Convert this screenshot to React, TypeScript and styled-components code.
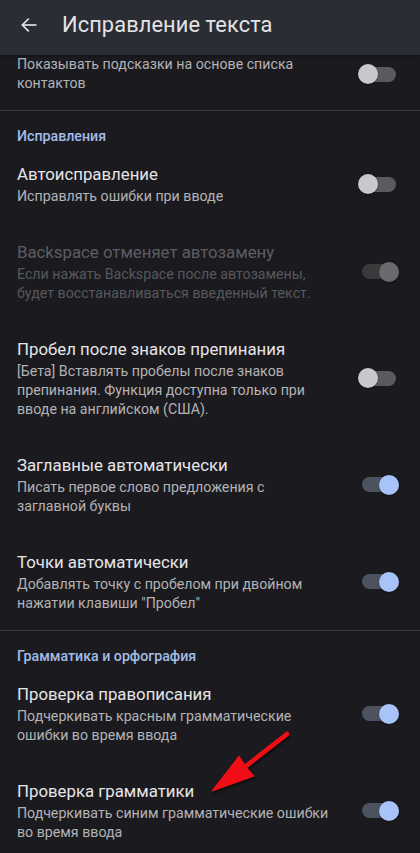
import React from "react";
import styled, { createGlobalStyle } from "styled-components";

const GlobalStyle = createGlobalStyle`
  html, body {
    margin: 0;
    padding: 0;
    background: #1b1b1f;
  }
  body {
    font-family: Roboto, "Noto Sans", "Liberation Sans", sans-serif;
  }
`;

const Screen = styled.div`
  position: relative;
  width: 420px;
  height: 853px;
  overflow: hidden;
  background: #1b1b1f;
  color: #e4e3e6;
`;

const TopBar = styled.header`
  display: flex;
  align-items: center;
  height: 55px;
  background: #2a2d33;
  box-shadow: 0 1px 2px rgba(0, 0, 0, 0.4);
  position: relative;
  z-index: 1;
`;

const BackButton = styled.div`
  display: flex;
  align-items: center;
  justify-content: center;
  width: 58px;
  height: 55px;
  padding-bottom: 6px;
  box-sizing: border-box;
  color: #e4e3e6;
`;

const Title = styled.h1`
  margin: 0 0 0 4px;
  font-size: 21.8px;
  font-weight: 400;
  color: #e4e3e6;
  letter-spacing: 0.1px;
  padding-bottom: 6px;
`;

const List = styled.div`
  display: flex;
  flex-direction: column;
`;

const Row = styled.div<{ $top?: number }>`
  display: flex;
  align-items: center;
  padding: ${(p) => p.$top ?? 17}px 24px 17px 17px;
`;

const TextBlock = styled.div`
  flex: 1;
  display: flex;
  flex-direction: column;
`;

const ItemTitle = styled.div<{ $disabled?: boolean }>`
  font-size: 16.8px;
  line-height: 25px;
  color: ${(p) => (p.$disabled ? "#5d5d61" : "#e6e5e8")};
`;

const ItemSub = styled.div<{ $disabled?: boolean }>`
  font-size: 14.2px;
  line-height: 19px;
  color: ${(p) => (p.$disabled ? "#58585c" : "#b3b2b6")};
  white-space: nowrap;
`;

const Divider = styled.div`
  height: 1px;
  background: #3a3a3e;
`;

const SectionHeader = styled.div`
  padding: 16px 17px 0;
  font-size: 14.2px;
  line-height: 18px;
  font-weight: 500;
  color: #a3bde8;
`;

const Track = styled.div<{ $on: boolean; $disabled?: boolean }>`
  position: relative;
  width: 34px;
  height: 15px;
  border-radius: 8px;
  flex-shrink: 0;
  background: ${(p) =>
    p.$disabled ? "#3a3a3d" : p.$on ? "#4c5260" : "#5b5b5f"};
`;

const Thumb = styled.div<{ $on: boolean; $disabled?: boolean }>`
  position: absolute;
  top: 50%;
  left: ${(p) => (p.$on ? "17px" : "-4px")};
  width: 20px;
  height: 20px;
  margin-top: -10px;
  border-radius: 50%;
  background: ${(p) =>
    p.$disabled ? "#6b6b6e" : p.$on ? "#a8c3f7" : "#c9c9cb"};
  box-shadow: 0 1px 2px rgba(0, 0, 0, 0.35);
`;

const ArrowLayer = styled.svg`
  position: absolute;
  left: 0;
  top: 0;
  pointer-events: none;
`;

function Toggle({ on, disabled }: { on: boolean; disabled?: boolean }) {
  return (
    <Track $on={on} $disabled={disabled}>
      <Thumb $on={on} $disabled={disabled} />
    </Track>
  );
}

interface Setting {
  title?: string;
  lines: string[];
  on: boolean;
  disabled?: boolean;
}

function SettingRow({ s, top }: { s: Setting; top?: number }) {
  return (
    <Row $top={top}>
      <TextBlock>
        {s.title && <ItemTitle $disabled={s.disabled}>{s.title}</ItemTitle>}
        {s.lines.map((l, i) => (
          <ItemSub key={i} $disabled={s.disabled}>
            {l}
          </ItemSub>
        ))}
      </TextBlock>
      <Toggle on={s.on} disabled={s.disabled} />
    </Row>
  );
}

const corrections: Setting[] = [
  { title: "Автоисправление", lines: ["Исправлять ошибки при вводе"], on: false },
  {
    title: "Backspace отменяет автозамену",
    lines: ["Если нажать Backspace после автозамены,", "будет восстанавливаться введенный текст."],
    on: true,
    disabled: true,
  },
  {
    title: "Пробел после знаков препинания",
    lines: [
      "[Бета] Вставлять пробелы после знаков",
      "препинания. Функция доступна только при",
      "вводе на английском (США).",
    ],
    on: false,
  },
  {
    title: "Заглавные автоматически",
    lines: ["Писать первое слово предложения с", "заглавной буквы"],
    on: true,
  },
  {
    title: "Точки автоматически",
    lines: ["Добавлять точку с пробелом при двойном", 'нажатии клавиши "Пробел"'],
    on: true,
  },
];

const grammar: Setting[] = [
  {
    title: "Проверка правописания",
    lines: ["Подчеркивать красным грамматические", "ошибки во время ввода"],
    on: true,
  },
  {
    title: "Проверка грамматики",
    lines: ["Подчеркивать синим грамматические ошибки", "во время ввода"],
    on: true,
  },
];

export default function App() {
  return (
    <Screen>
      <GlobalStyle />
      <TopBar>
        <BackButton>
          <svg width="20" height="20" viewBox="0 0 24 24" fill="none" stroke="currentColor" strokeWidth="2" strokeLinecap="square">
            <path d="M20 12H5" />
            <path d="M11 5l-7 7 7 7" />
          </svg>
        </BackButton>
        <Title>Исправление текста</Title>
      </TopBar>
      <List>
        <SettingRow
          s={{ lines: ["Показывать подсказки на основе списка", "контактов"], on: false }}
          top={0}
        />
        <Divider />
        <SectionHeader>Исправления</SectionHeader>
        {corrections.map((s, i) => (
          <SettingRow key={i} s={s} />
        ))}
        <Divider />
        <SectionHeader>Грамматика и орфография</SectionHeader>
        {grammar.map((s, i) => (
          <SettingRow key={i} s={s} />
        ))}
      </List>
      <ArrowLayer width="420" height="853" viewBox="0 0 420 853">
        <defs>
          <filter id="sh" x="-20%" y="-20%" width="140%" height="140%">
            <feDropShadow dx="1" dy="2" stdDeviation="1.5" floodColor="#000" floodOpacity="0.6" />
          </filter>
        </defs>
        <g filter="url(#sh)" fill="#f01018" stroke="#f01018">
          <line x1="287" y1="734" x2="246" y2="766" strokeWidth="4.5" strokeLinecap="round" />
          <path d="M212 791 L239 756 L246 767 L254 776 Z" strokeWidth="1" strokeLinejoin="round" />
        </g>
      </ArrowLayer>
    </Screen>
  );
}
